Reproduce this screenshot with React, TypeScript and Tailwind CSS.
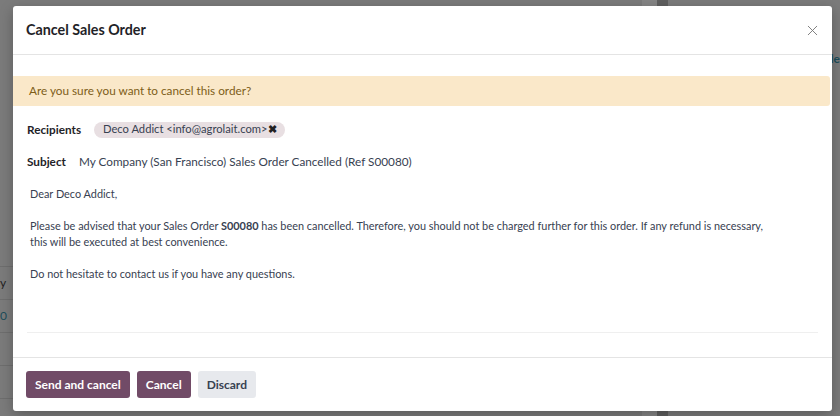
import { X } from "lucide-react";

const font = { fontFamily: 'Lato, "Open Sans", sans-serif' };

function Backdrop() {
  return (
    <div className="flex h-full w-full bg-[#7b7b7b]">
      <div className="flex w-[642px] flex-col pt-[234px]">
        {["", "y", "0", "", ""].map((t, i) => (
          <div
            key={i}
            className={`flex h-[33px] items-center border-b border-[#6e6e6e] text-[12px] ${
              t === "0" ? "text-[#1d4d5a]" : "text-[#222]"
            }`}
          >
            {t}
          </div>
        ))}
      </div>
      <div className="w-[15px] bg-[#858585]" />
      <div className="w-[11px] bg-[#5f5f5f]" />
      <div className="flex flex-1 flex-col items-end pt-[50px] text-[12px] font-bold text-[#1d4d5a]">
        le
      </div>
    </div>
  );
}

export default function App() {
  return (
    <div className="relative h-[416px] w-[840px] overflow-hidden" style={font}>
      <Backdrop />

      <div className="absolute left-[13px] top-[6px] flex h-[405px] w-[819px] flex-col rounded-[3px] bg-white text-[#374151] shadow-[0_4px_14px_rgba(0,0,0,0.25)]">
        <header className="flex h-[49px] items-center justify-between border-b border-[#e4e4e4] pl-[13px] pr-[11px]">
          <h1 className="text-[14.3px] font-bold text-[#1f2328]">Cancel Sales Order</h1>
          <X className="h-[17px] w-[17px] text-[#777]" strokeWidth={1.3} />
        </header>

        <div className="mt-[21px] mr-[2px] flex h-[30px] items-center rounded-r-[3px] bg-[#fae8c9] pl-[16px] text-[11.75px] text-[#7d5d18]">
          Are you sure you want to cancel this order?
        </div>

        <div className="flex flex-1 flex-col px-[14px]">
          <div className="mt-[15px] flex items-center text-[11.75px]">
            <span className="w-[67px] font-bold text-[#1f2328]">Recipients</span>
            <span className="flex h-[16px] items-center rounded-full bg-[#e8dfe2] pl-[9px] pr-[8px] text-[11.2px] text-[#374151]">
              Deco Addict &lt;info@agrolait.com&gt;
              <span className="ml-[1px] text-[10.5px] font-bold text-[#222]">✖</span>
            </span>
          </div>

          <div className="mt-[14px] flex items-center text-[11.75px]">
            <span className="w-[52px] font-bold text-[#1f2328]">Subject</span>
            <span>My Company (San Francisco) Sales Order Cancelled (Ref S00080)</span>
          </div>

          <div className="mt-[16px] pl-[3px] pr-[40px] text-[10.9px] leading-[16px] text-[#374151]">
            <p>Dear Deco Addict,</p>
            <p className="mt-[16px]">
              Please be advised that your Sales Order <b className="font-bold">S00080</b> has been cancelled.
              Therefore, you should not be charged further for this order. If any refund is necessary,
              this will be executed at best convenience.
            </p>
            <p className="mt-[16px]">Do not hesitate to contact us if you have any questions.</p>
          </div>

          <div className="mt-auto mb-[24px] border-t border-[#efefef]" />
        </div>

        <footer className="flex h-[54px] items-center gap-[7px] border-t border-[#e4e4e4] px-[13px]">
          <button className="h-[27px] rounded-[3px] bg-[#714b67] px-[9px] text-[12px] font-bold text-white">
            Send and cancel
          </button>
          <button className="h-[27px] rounded-[3px] bg-[#714b67] px-[9px] text-[12px] font-bold text-white">
            Cancel
          </button>
          <button className="h-[27px] rounded-[3px] bg-[#e7e9ed] px-[9px] text-[12px] font-bold text-[#374151]">
            Discard
          </button>
        </footer>
      </div>
    </div>
  );
}
